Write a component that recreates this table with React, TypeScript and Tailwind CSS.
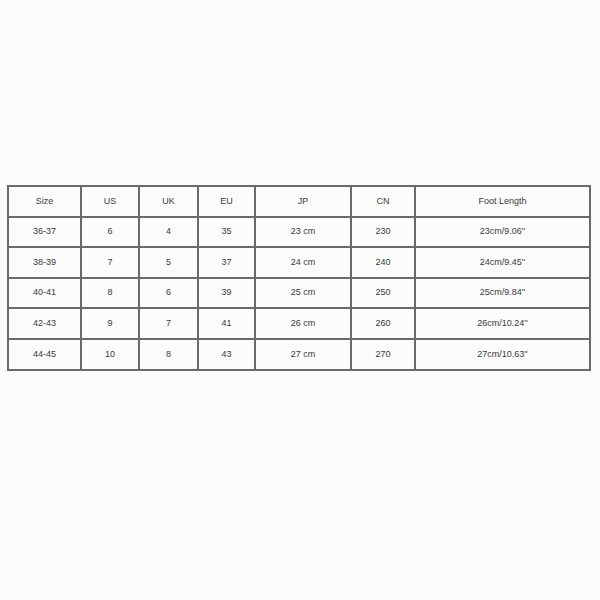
const headers = ["Size", "US", "UK", "EU", "JP", "CN", "Foot Length"];
const widths = ["w-[73px]", "w-[58px]", "w-[59px]", "w-[57px]", "w-[96px]", "w-[64px]", "w-[175px]"];

const rows = [
  ["36-37", "6", "4", "35", "23 cm", "230", "23cm/9.06''"],
  ["38-39", "7", "5", "37", "24 cm", "240", "24cm/9.45''"],
  ["40-41", "8", "6", "39", "25 cm", "250", "25cm/9.84''"],
  ["42-43", "9", "7", "41", "26 cm", "260", "26cm/10.24''"],
  ["44-45", "10", "8", "43", "27 cm", "270", "27cm/10.63''"],
];

const App = () => {
  return (
    <div className="w-[600px] h-[600px] bg-[#fbfbfb] pt-[185px] pl-[7px] font-['Liberation_Sans',Arial,sans-serif]">
      <table className="border-collapse border-2 border-[#6a6a6a] text-[9px] text-[#3a3a3a] table-fixed">
        <thead>
          <tr className="h-[30.6px]">
            {headers.map((h, i) => (
              <th key={h} className={`${widths[i]} border-2 border-[#6a6a6a] font-normal text-center p-0`}>
                {h}
              </th>
            ))}
          </tr>
        </thead>
        <tbody>
          {rows.map(row => (
            <tr key={row[0]} className="h-[30.6px]">
              {row.map((c, i) => (
                <td key={i} className={`${widths[i]} border-2 border-[#6a6a6a] text-center p-0`}>
                  {c}
                </td>
              ))}
            </tr>
          ))}
        </tbody>
      </table>
    </div>
  );
};

export default App;
